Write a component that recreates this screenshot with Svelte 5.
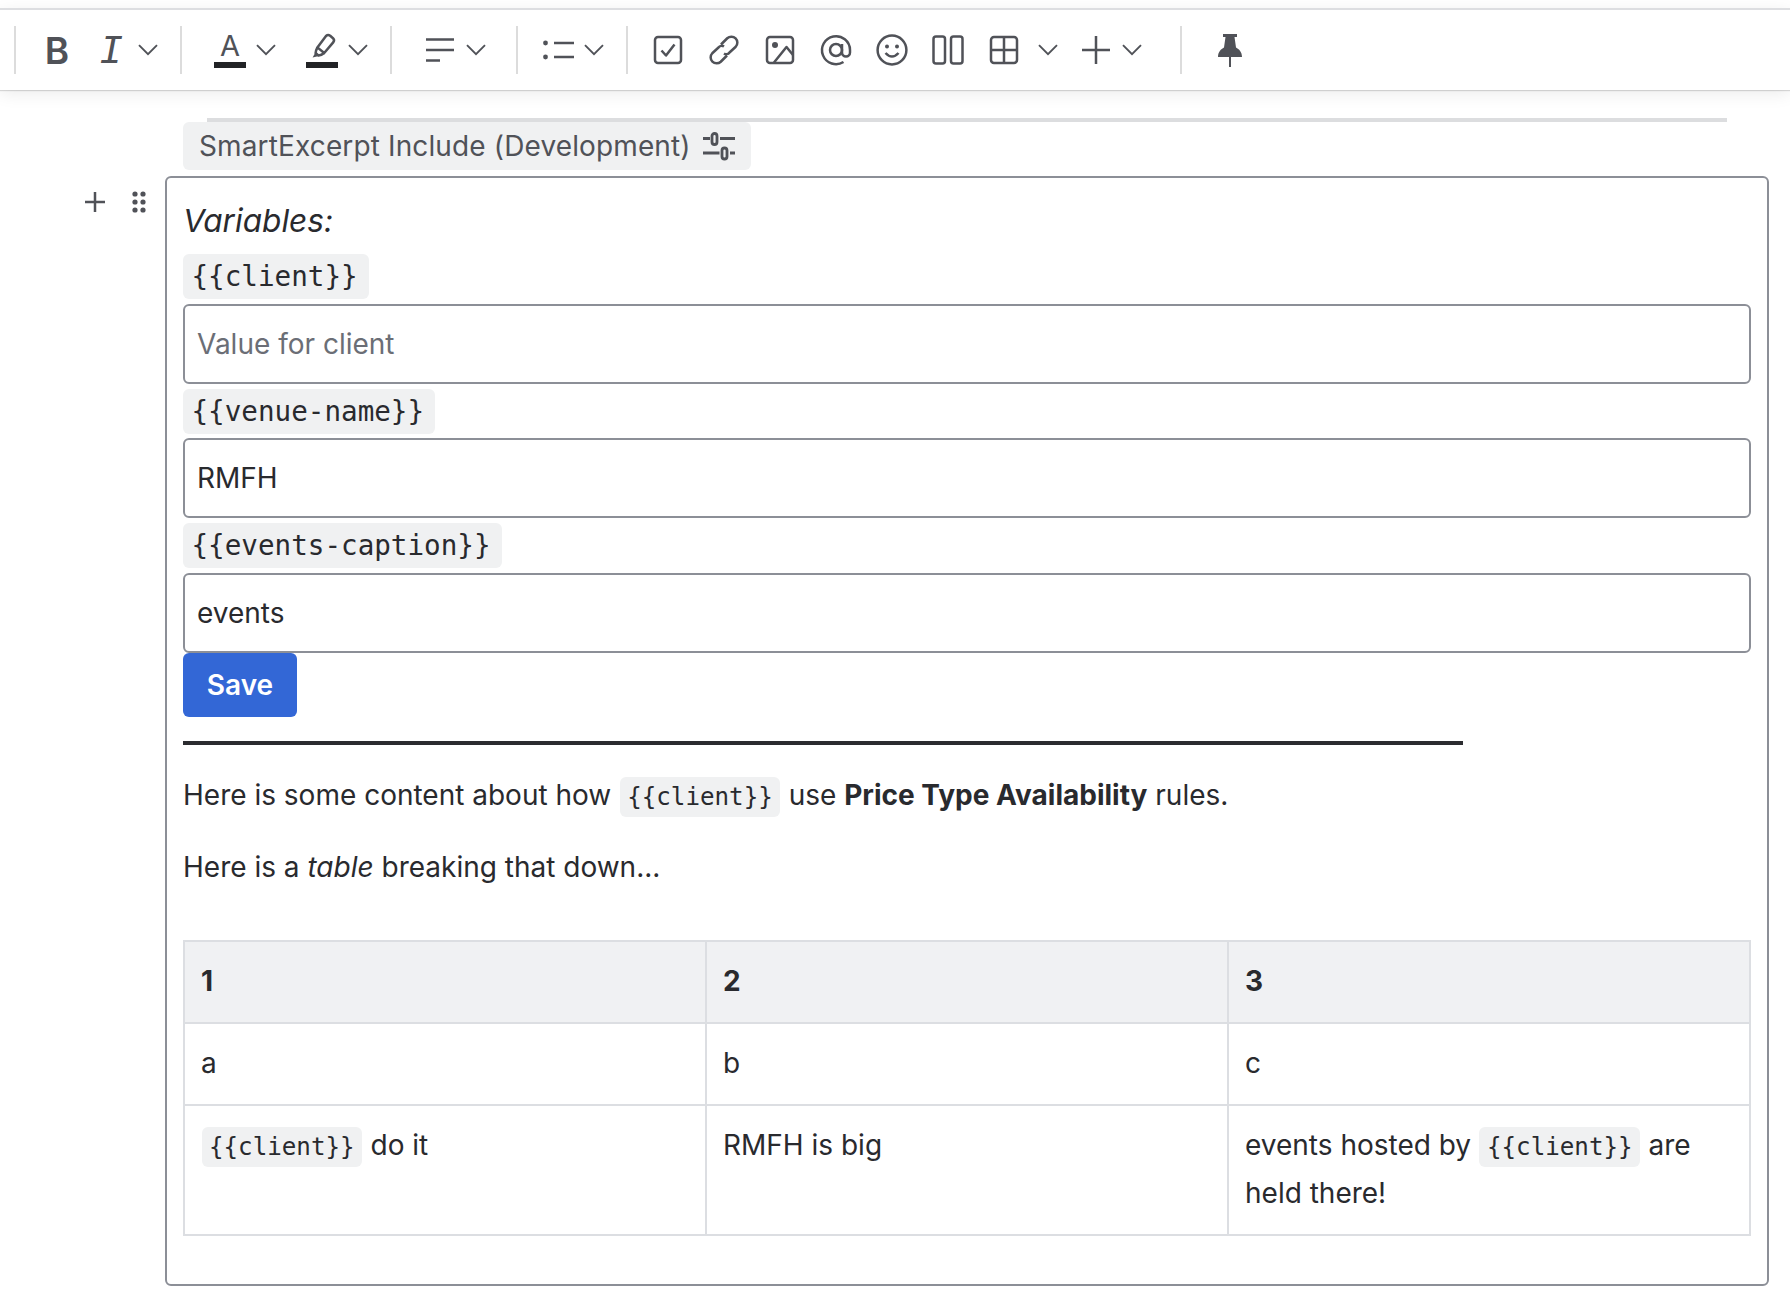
<script>
  const vars = [
    { name: '{{client}}', value: '', placeholder: 'Value for client' },
    { name: '{{venue-name}}', value: 'RMFH', placeholder: '' },
    { name: '{{events-caption}}', value: 'events', placeholder: '' }
  ];
</script>

{#snippet chev()}
  <svg class="chev" viewBox="0 0 20 12" width="20" height="12"><path d="M1 1.2 L10 10.2 L19 1.2"/></svg>
{/snippet}

<div class="page">
  <div class="toolbar">
    <div class="sep"></div>
    <div class="group g1">
      <svg class="ico" viewBox="0 0 32 32" width="32" height="32"><text class="tb" x="16" y="29.5">B</text></svg>
      <svg class="ico m22" viewBox="0 0 32 32" width="32" height="32"><text class="ti" x="16" y="29">I</text></svg>
      <span class="m11">{@render chev()}</span>
    </div>
    <div class="sep"></div>
    <div class="group g2">
      <svg class="ico tall" viewBox="0 0 32 36" width="32" height="36"><text class="ta" x="16" y="24">A</text><rect class="bar" x="0" y="30" width="32" height="6"/></svg>
      <span class="m10">{@render chev()}</span>
      <svg class="ico tall m30" viewBox="0 0 32 36" width="32" height="36">
        <path d="M20 4 Q22 2.2 24.2 3.8 L27 6.2 Q29 8.2 27.2 10.4 L18.2 21 L11.4 15.4 Z"/>
        <path d="M11.4 15.4 Q9.8 18.6 9.6 21 L12.6 23.6 Q15.4 23.2 18.2 21"/>
        <path class="solid" d="M9.4 20.6 L13 24 L6.6 25.6 Z"/>
        <rect class="bar" x="0" y="30" width="32" height="6"/>
      </svg>
      <span class="m10">{@render chev()}</span>
    </div>
    <div class="sep"></div>
    <div class="group g3">
      <svg class="ico" viewBox="0 0 32 32" width="32" height="32"><path class="thick" d="M2 5.5H30M2 16H30M2 26.5H16"/></svg>
      <span class="m10">{@render chev()}</span>
    </div>
    <div class="sep"></div>
    <div class="group g4">
      <svg class="ico" viewBox="0 0 32 32" width="32" height="32"><circle class="solid" cx="3.5" cy="9" r="2.4"/><circle class="solid" cx="3.5" cy="23" r="2.4"/><path class="thick" d="M12 9H32M12 23H32"/></svg>
      <span class="m10">{@render chev()}</span>
    </div>
    <div class="sep"></div>
    <div class="group g5">
      <svg class="ico" viewBox="0 0 32 32" width="32" height="32"><rect x="3" y="3" width="26" height="26" rx="3"/><path d="M9.5 16.5 L14 21.5 L22.5 10.5"/></svg>
      <svg class="ico m24" viewBox="0 0 32 32" width="32" height="32"><path d="M13 10.5 L19.26 4.26 A6 6 0 0 1 27.74 12.74 L21.5 18.5 a4 4 0 0 1 -5.5 1"/><path d="M19 21.5 L12.74 27.74 A6 6 0 0 1 4.26 19.26 L10.5 13.5 a4 4 0 0 1 5.5 -1"/></svg>
      <svg class="ico m24" viewBox="0 0 32 32" width="32" height="32"><rect x="3" y="3" width="26" height="26" rx="3"/><circle class="solid" cx="11" cy="11" r="3"/><path d="M10 28.5 L22.5 13 L29 21"/></svg>
      <svg class="ico m24" viewBox="0 0 32 32" width="32" height="32"><circle cx="16" cy="16" r="6"/><path d="M22 10 V18.5 a4 4 0 0 0 8 0 V16 a14 14 0 1 0 -6.5 12"/></svg>
      <svg class="ico m24" viewBox="0 0 32 32" width="32" height="32"><circle cx="16" cy="16" r="14.4"/><circle class="solid" cx="11" cy="12.5" r="2"/><circle class="solid" cx="21" cy="12.5" r="2"/><path d="M9.5 19 Q16 26 22.5 19"/></svg>
      <svg class="ico m24" viewBox="0 0 32 32" width="32" height="32"><rect x="1.5" y="2.5" width="11.5" height="27" rx="2.5"/><rect x="19" y="2.5" width="11.5" height="27" rx="2.5"/></svg>
      <svg class="ico m24" viewBox="0 0 32 32" width="32" height="32"><rect x="3" y="3" width="26" height="26" rx="3"/><path d="M16 3V29M3 16H29"/></svg>
      <span class="m18">{@render chev()}</span>
      <svg class="ico m22" viewBox="0 0 32 32" width="32" height="32"><path d="M2 16H30M16 2V30"/></svg>
      <span class="m10">{@render chev()}</span>
    </div>
    <div class="sep"></div>
    <div class="group g6">
      <svg class="ico" viewBox="0 0 32 32" width="32" height="32">
        <path class="solid" d="M9 0 H23 V3 H20.5 L22 13.5 C25 15 28 18 28 23 H4 C4 18 7 15 10 13.5 L11.5 3 H9 Z"/>
        <rect class="solid" x="15" y="23" width="2" height="10"/>
      </svg>
    </div>
  </div>

  <div class="rule"></div>
  <div class="pill">
    <span class="pill-text">SmartExcerpt Include (Development)</span>
    <svg class="ico sliders" viewBox="0 0 32 28" width="32" height="28"><path d="M0 6.5H7M17 6.5H32M0 21H16.5M27 21H32"/><rect x="9" y="1.5" width="5" height="11" rx="2.5"/><rect x="19" y="16" width="5" height="11" rx="2.5"/></svg>
  </div>

  <div class="row">
    <div class="gutter">
      <svg class="ico plus" viewBox="0 0 22 22" width="22" height="22"><path d="M1 11H21M11 1V21"/></svg>
      <svg class="ico dots" viewBox="0 0 14 22" width="14" height="22">
        <circle class="solid" cx="3" cy="3" r="2.6"/><circle class="solid" cx="11" cy="3" r="2.6"/>
        <circle class="solid" cx="3" cy="11" r="2.6"/><circle class="solid" cx="11" cy="11" r="2.6"/>
        <circle class="solid" cx="3" cy="19" r="2.6"/><circle class="solid" cx="11" cy="19" r="2.6"/>
      </svg>
    </div>
    <div class="box">
      <div class="heading">Variables:</div>
      {#each vars as v}
        <code class="chip">{v.name}</code>
        <input class="field" value={v.value} placeholder={v.placeholder} />
      {/each}
      <button class="save">Save</button>
      <div class="hr"></div>
      <p class="p1">Here is some content about how <code class="inline">{'{{client}}'}</code> use <strong>Price Type Availability</strong> rules.</p>
      <p class="p2">Here is a <em>table</em> breaking that down...</p>
      <table>
        <thead>
          <tr><th>1</th><th>2</th><th>3</th></tr>
        </thead>
        <tbody>
          <tr><td>a</td><td>b</td><td>c</td></tr>
          <tr>
            <td><code class="inline">{'{{client}}'}</code> do it</td>
            <td>RMFH is big</td>
            <td>events hosted by <code class="inline">{'{{client}}'}</code> are held there!</td>
          </tr>
        </tbody>
      </table>
    </div>
  </div>
</div>

<style>
  :global(body) { margin: 0; background: #fff; }
  .page {
    width: 1790px;
    height: 1306px;
    overflow: hidden;
    font-family: Inter, "Liberation Sans", sans-serif;
    font-size: 28px;
    line-height: 48px;
    color: #292a2e;
  }
  .toolbar {
    margin-top: 8px;
    height: 80px;
    border-top: 2px solid #dddee1;
    box-sizing: content-box;
    display: flex;
    align-items: center;
    padding-left: 14px;
    background: #fff;
    box-shadow: 0 1px 1px rgba(0,0,0,.14), 0 4px 16px rgba(0,0,0,.08);
  }
  .sep { width: 2px; height: 48px; background: #dcdcdc; flex: none; }
  .group { display: flex; align-items: center; flex: none; }
  .g1 { padding: 0 22px 0 25px; }
  .g2 { padding: 0 22px 0 32px; }
  .g3 { padding: 0 30px 0 32px; }
  .g4 { padding: 0 22px 0 24px; }
  .g5 { padding: 0 38px 0 24px; }
  .g6 { padding: 0 0 0 32px; }
  .m10 { margin-left: 10px; display: flex; }
  .m11 { margin-left: 11px; display: flex; }
  .m18 { margin-left: 18px; display: flex; }
  .m22 { margin-left: 22px; }
  .m24 { margin-left: 24px; }
  .m30 { margin-left: 30px; }

  svg { display: block; overflow: visible; flex: none; }
  .ico path, .ico rect, .ico circle { fill: none; stroke: #505258; stroke-width: 2.5; stroke-linejoin: round; }
  .ico path.thick { stroke-width: 2.7; }
  .ico .solid, .ico path.solid, .ico rect.solid, .ico circle.solid { fill: #505258; stroke: none; }
  .ico rect.bar { fill: #222326; stroke: none; }
  .ico text { fill: #505258; text-anchor: middle; }
  .tb { font: 600 37px Inter, sans-serif; }
  .ti { font: italic 400 40px "Liberation Mono", monospace; }
  .ta { font: 400 29px Inter, sans-serif; }
  .chev path { fill: none; stroke: #505258; stroke-width: 1.9; }
  .sliders path, .sliders rect { stroke-width: 2.8; }

  .rule { margin: 28px 0 0 207px; width: 1520px; height: 4px; background: #dcdddf; }
  .pill {
    margin: 0 0 0 183px;
    width: 568px;
    height: 48px;
    box-sizing: border-box;
    padding-left: 16px;
    display: flex;
    align-items: center;
    gap: 12px;
    background: #f0f1f2;
    border-radius: 6px;
    color: #505258;
  }
  .pill-text { letter-spacing: .13px; }
  .row { display: flex; margin-top: 6px; }
  .gutter { width: 165px; flex: none; box-sizing: border-box; display: flex; align-items: flex-start; padding: 15px 0 0 84px; gap: 26px; }
  .box {
    width: 1604px;
    height: 1110px;
    box-sizing: border-box;
    border: 2px solid #8c8f97;
    border-radius: 6px;
    padding: 20px 16px 0;
  }
  .heading { font-style: italic; font-size: 31.6px; line-height: 46px; margin-bottom: 10px; }
  .chip {
    display: block;
    width: fit-content;
    height: 45px;
    box-sizing: border-box;
    padding: 0 11px 0 8.5px;
    background: #f0f1f2;
    border-radius: 6px;
    font-family: "DejaVu Sans Mono", "Liberation Mono", monospace;
    font-size: 27.6px;
    line-height: 46px;
  }
  .field {
    display: block;
    width: 100%;
    height: 80px;
    box-sizing: border-box;
    margin: 4.5px 0 5px;
    padding: 0 12px;
    border: 2px solid #8c8f97;
    border-radius: 6px;
    outline: none;
    background: #fff;
    color: #292a2e;
    font: 400 28px Inter, sans-serif;
  }
  .field::placeholder { color: #6b6e76; opacity: 1; }
  .save {
    display: block;
    width: 114px;
    height: 64px;
    margin: -4.5px 0 0;
    border: 0;
    border-radius: 6px;
    background: #3367d6;
    color: #fff;
    font: 600 28px Inter, sans-serif;
  }
  .hr { margin: 24px 0 0; width: 1280px; height: 4px; background: #2b2c30; }
  p { margin: 0; }
  .p1 { margin-top: 26px; }
  .p2 { margin-top: 24px; }
  strong { font-weight: 700; }
  .inline {
    display: inline-block;
    height: 40px;
    padding: 0 7.5px;
    margin: 0 .5px;
    background: #f0f1f2;
    border-radius: 6px;
    font-family: "DejaVu Sans Mono", "Liberation Mono", monospace;
    font-size: 24.2px;
    line-height: 40px;
    vertical-align: baseline;
  }
  table {
    margin-top: 49px;
    width: 1568px;
    table-layout: fixed;
    border-collapse: collapse;
    border: 2px solid #dcdee2;
  }
  th, td {
    border: 2px solid #dcdee2;
    padding: 15px 16px 17px;
    text-align: left;
    vertical-align: top;
    font-weight: 400;
  }
  th { background: #f0f1f3; font-weight: 700; }
</style>
